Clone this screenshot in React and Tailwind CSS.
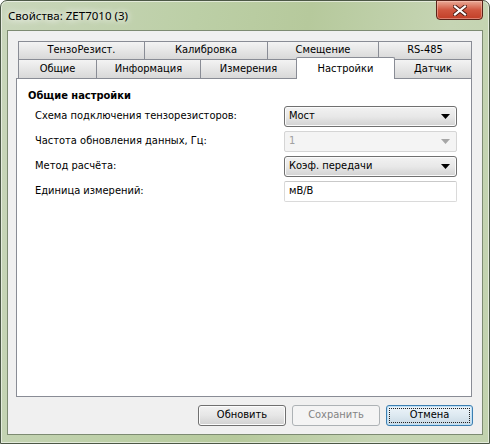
import React from "react";

const ui = { fontFamily: '"DejaVu Sans Condensed", "DejaVu Sans", Tahoma, sans-serif' };

function Arrow({ color = "#000" }) {
  return (
    <svg width="9" height="5" viewBox="0 0 9 5">
      <path d="M0 0H9L4.5 5Z" fill={color} />
    </svg>
  );
}

function Tab({ label, w }) {
  return (
    <div
      className="-ml-px first:ml-0 h-full flex items-center justify-center border border-b-0 border-[#898c95] bg-gradient-to-b from-[#f3f3f3] via-[#e6e6e6] to-[#d8d8d8] text-[11px] text-black"
      style={{ width: w }}
    >
      {label}
    </div>
  );
}

function Combo({ value, disabled }) {
  if (disabled) {
    return (
      <div className="w-[173px] h-[21px] flex items-center justify-between rounded-[2px] border border-[#d5d5d5] bg-[#f4f4f4] pl-[4px] pr-[6px] text-[11px] text-[#a0a0a0]">
        <span>{value}</span>
        <Arrow color="#a6a6a6" />
      </div>
    );
  }
  return (
    <div className="w-[173px] h-[21px] flex items-center justify-between rounded-[3px] border border-[#707070] bg-gradient-to-b from-[#f2f2f2] via-[#e8e8e8] to-[#d2d2d2] pl-[4px] pr-[6px] text-[11px] text-black shadow-[inset_0_0_0_1px_#fbfbfb]">
      <span>{value}</span>
      <Arrow />
    </div>
  );
}

function Row({ label, children }) {
  return (
    <div className="h-[21px] flex items-center">
      <span className="flex-1 pl-[7px] text-[11px] text-black">{label}</span>
      <div className="mr-[3px]">{children}</div>
    </div>
  );
}

export default function App() {
  return (
    <div
      className="w-[490px] h-[444px] flex flex-col rounded-t-[7px] border border-[#4c5846] bg-[linear-gradient(100deg,#c9d6bb_0%,#bccfa6_35%,#b6c99c_55%,#c6d5b4_80%,#c2d2ae_100%)] shadow-[inset_0_0_0_1px_rgba(255,255,255,0.55)]"
      style={ui}
    >
      {/* title bar */}
      <div className="h-[29px] flex items-start justify-between">
        <span
          className="ml-[7px] mt-[7px] text-[11.5px] leading-[16px] text-black [text-shadow:0_0_6px_#ffffff,0_0_10px_#ffffff]"
          style={{ fontFamily: '"Noto Sans", "Open Sans", sans-serif' }}
        >
          Свойства: ZET7010 (3)
        </span>
        <div className="-mt-px mr-[6px] w-[47px] h-[20px] flex items-center justify-center rounded-b-[4px] border border-[#5a2319] bg-gradient-to-b from-[#e9a996] via-[#d0563f] to-[#c23e27] shadow-[inset_0_0_0_1px_rgba(255,210,200,0.45)]">
          <svg width="14" height="11" viewBox="0 0 14 11">
            <path
              d="M2 1.5L12 9.5M12 1.5L2 9.5"
              stroke="#4a1a12"
              strokeWidth="4"
              strokeLinecap="square"
            />
            <path
              d="M2 1.5L12 9.5M12 1.5L2 9.5"
              stroke="#ffffff"
              strokeWidth="2.2"
              strokeLinecap="square"
            />
          </svg>
        </div>
      </div>

      {/* client area */}
      <div className="mx-[6px] mb-[8px] flex-1 flex flex-col border border-[#7d8b72] bg-[#f0f0f0] pl-[8px] pr-[10px] pt-[10px] pb-[8px]">
        <div className="ml-[2px] h-[18px] flex">
          <Tab label="ТензоРезист." w={127} />
          <Tab label="Калибровка" w={124} />
          <Tab label="Смещение" w={112} />
          <Tab label="RS-485" w={94} />
        </div>
        <div className="ml-[2px] h-[19px] flex items-end">
          <Tab label="Общие" w={79} />
          <Tab label="Информация" w={105} />
          <Tab label="Измерения" w={97} />
          <div className="-ml-px relative z-10 w-[99px] h-[22px] -mb-px flex items-start justify-center pt-[3px] rounded-t-[2px] border border-b-0 border-[#898c95] bg-white text-[11px] text-black">
            Настройки
          </div>
          <Tab label="Датчик" w={78} />
        </div>

        {/* settings page */}
        <div className="flex-1 border border-[#898c95] bg-white px-[11px] pt-[9px]">
          <div className="h-[15px] leading-[15px] text-[11px] font-bold text-black">
            Общие настройки
          </div>
          <div className="mt-[3px] flex flex-col gap-[4px]">
            <Row label="Схема подключения тензорезисторов:">
              <Combo value="Мост" />
            </Row>
            <Row label="Частота обновления данных, Гц:">
              <Combo value="1" disabled />
            </Row>
            <Row label="Метод расчёта:">
              <Combo value="Коэф. передачи" />
            </Row>
            <Row label="Единица измерений:">
              <div className="w-[173px] h-[21px] flex items-center rounded-[2px] border border-[#dadada] border-t-[#c9c9c9] bg-white pl-[4px] text-[11px] text-black">
                мВ/В
              </div>
            </Row>
          </div>
        </div>

        {/* buttons */}
        <div className="mt-[8px] flex justify-end gap-[6px] -mr-px">
          <div className="w-[88px] h-[21px] flex items-center justify-center rounded-[3px] border border-[#707070] bg-gradient-to-b from-[#f2f2f2] via-[#e6e6e6] to-[#d1d1d1] text-[11px] text-black shadow-[inset_0_0_0_1px_#fcfcfc]">
            Обновить
          </div>
          <div className="w-[88px] h-[21px] flex items-center justify-center rounded-[3px] border border-[#adb2b5] bg-[#f4f4f4] text-[11px] text-[#838383]">
            Сохранить
          </div>
          <div className="w-[87px] h-[21px] p-[2px] rounded-[3px] border border-[#3c7fb1] bg-gradient-to-b from-[#eef5fa] via-[#dde9f1] to-[#c9d9e4] shadow-[inset_0_0_0_1px_#bfe0f6]">
            <div className="w-full h-full flex items-center justify-center border border-dotted border-[#222] text-[11px] text-black">
              Отмена
            </div>
          </div>
        </div>
      </div>
    </div>
  );
}
